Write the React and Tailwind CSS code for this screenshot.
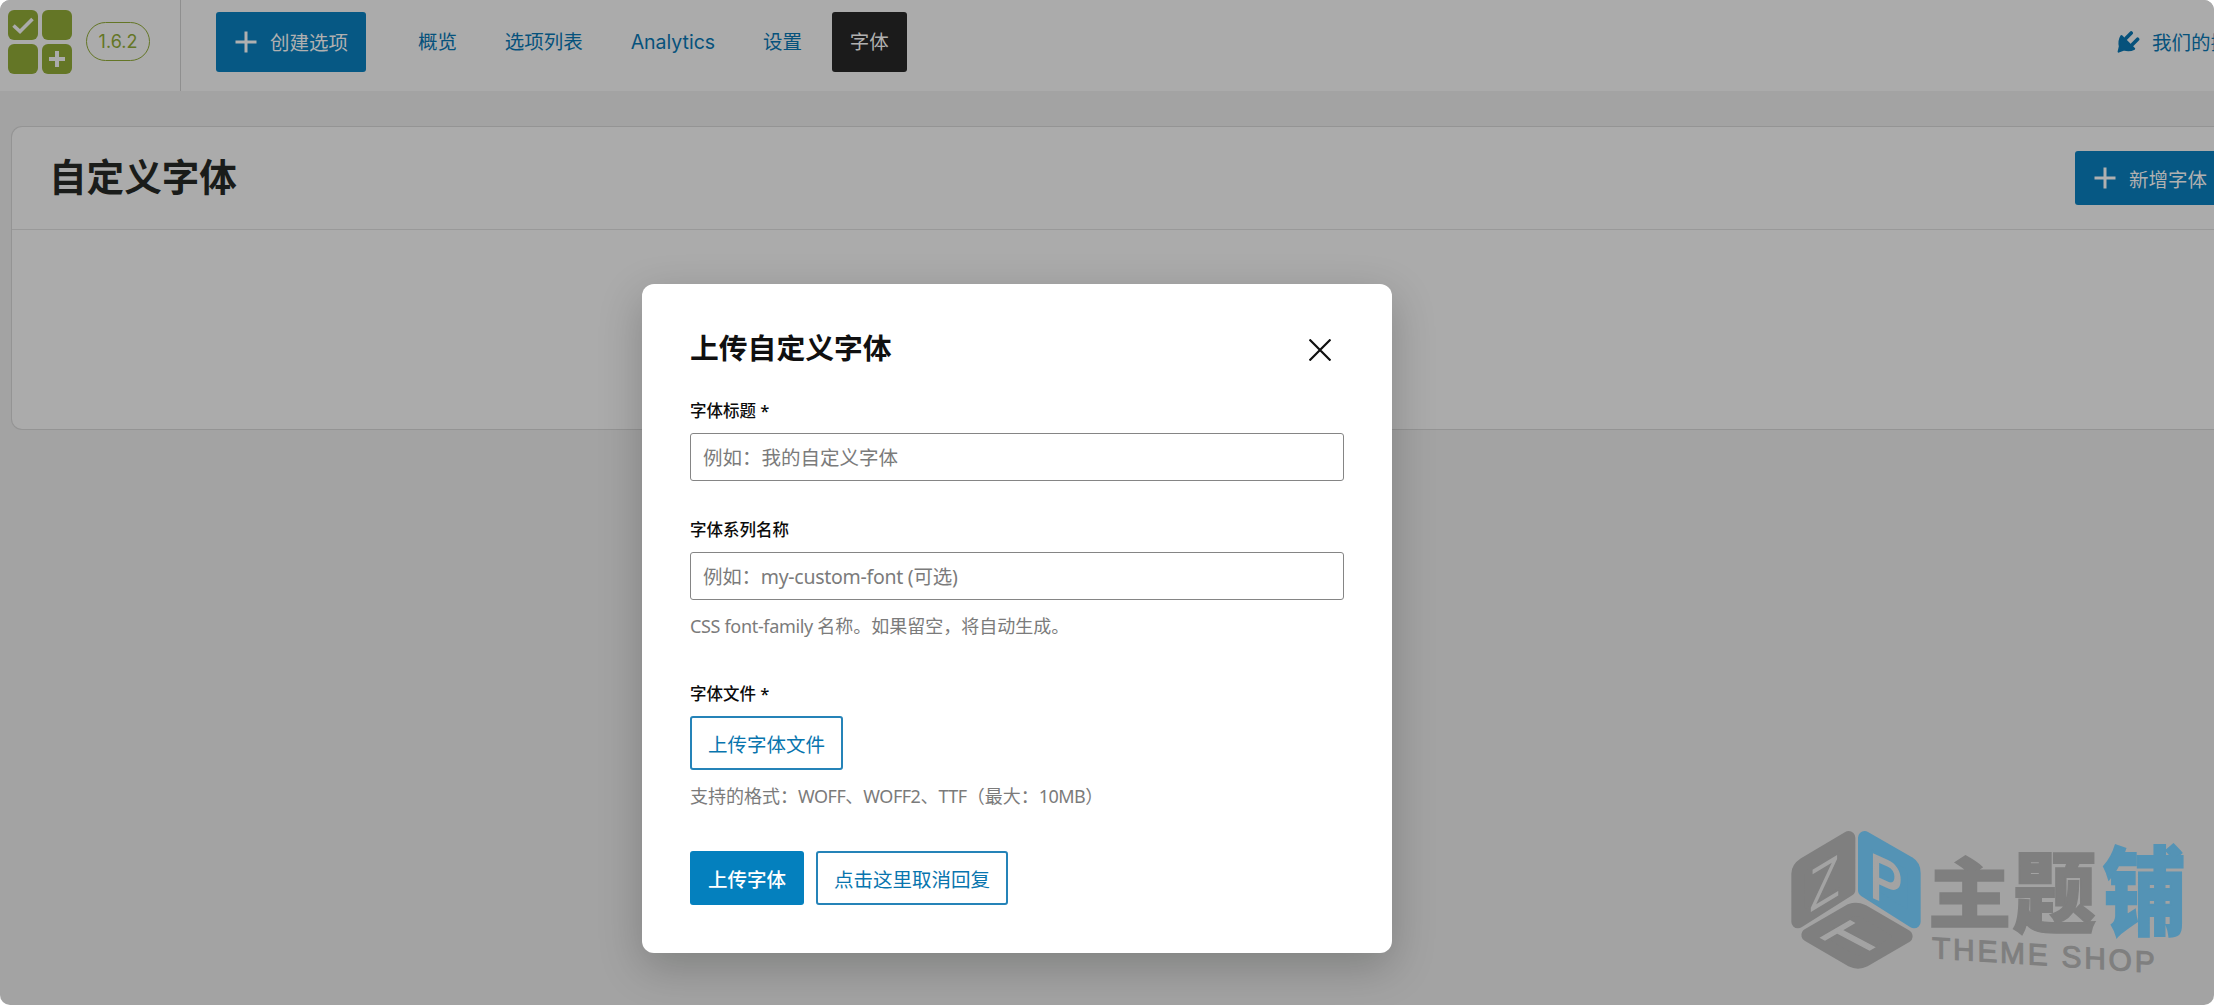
import React, { useState } from 'react';

const NAV_ITEMS = [
  { id: 'overview', label: '概览' },
  { id: 'list', label: '选项列表' },
  { id: 'analytics', label: 'Analytics' },
  { id: 'settings', label: '设置' },
  { id: 'fonts', label: '字体' }
];

const PlusIcon = () => (
  <svg width="22" height="22" viewBox="0 0 22 22" className="shrink-0">
    <path d="M11 0.5v21M0.5 11h21" stroke="currentColor" strokeWidth="3" />
  </svg>
);

const PlugIcon = () => (
  <svg width="24" height="24" viewBox="0 0 24 24" fill="currentColor" className="shrink-0">
    <path
      d="M5.4 6 18.2 18.8Q13.5 21.2 8 19.6L2.6 21.6 3.8 16.4Q2.6 10.6 5.4 6Z"
      stroke="currentColor"
      strokeWidth="2"
      strokeLinejoin="round"
    />
    <path d="M10 8.2 15.2 3M16.4 14.4 21.6 9.2" stroke="currentColor" strokeWidth="3.6" strokeLinecap="round" />
  </svg>
);

const Logo = () => (
  <svg width="64" height="64" viewBox="0 0 64 64" className="shrink-0">
    <g fill="#647626">
      <rect width="30" height="30" rx="6" />
      <rect x="34" width="30" height="30" rx="6" />
      <rect y="34" width="30" height="30" rx="6" />
      <rect x="34" y="34" width="30" height="30" rx="6" />
    </g>
    <path d="M5.5 15.5 12 21.5 24.5 9" fill="none" stroke="#ababab" strokeWidth="3.6" />
    <path d="M49 41v16M41 49h16" stroke="#ababab" strokeWidth="4" />
  </svg>
);

const Watermark = () => (
  <svg
    viewBox="0 0 1332 600"
    className="pointer-events-none absolute bottom-0 right-0 h-[200px] w-[444px] font-['Noto_Sans_CJK_SC',sans-serif]"
  >
    <g strokeLinejoin="round" strokeWidth="40">
      <path d="M236 98 102 178Q84 190 84 206V350L236 254Z" fill="#7f7f7f" stroke="#7f7f7f" />
      <path d="M284 98 416 174Q432 184 432 204V350L284 256Z" fill="#5493b5" stroke="#5493b5" />
      <path d="M242 316Q260 310 278 318L408 394 284 466Q264 476 244 466L114 390Z" fill="#7f7f7f" stroke="#7f7f7f" />
    </g>
    <g fill="#a3a3a3" className="font-['Liberation_Sans',sans-serif]" fontSize="150">
      <text transform="matrix(1 -.6 0 1.2 118 324)">Z</text>
      <text transform="matrix(.98 .45 0 1.25 299 272)" stroke="#a3a3a3" strokeWidth="5">P</text>
      <text transform="matrix(1.03 -.6 1.06 .56 259 458)" stroke="#a3a3a3" strokeWidth="4">T</text>
    </g>
    <g fontSize="250" fontWeight="900" strokeWidth="5">
      <text transform="translate(474 350) scale(1 .91)" fill="#7f7f7f" stroke="#7f7f7f">主</text>
      <text transform="translate(728 359) scale(1 1.05)" fill="#7f7f7f" stroke="#7f7f7f">题</text>
      <text transform="translate(998 366) scale(1 1.15)" fill="#5493b5" stroke="#5493b5">铺</text>
    </g>
    <text
      transform="translate(486 459) skewY(3.8)"
      className="font-['Liberation_Sans',sans-serif]"
      fontSize="90"
      textLength="668"
      fill="#7f7f7f"
      stroke="#7f7f7f"
      strokeWidth="3"
    >
      THEME SHOP
    </text>
  </svg>
);

const Header = ({ active, onSelect }) => (
  <header className="flex h-[91px] bg-[#ababab] text-[19.5px] text-[#06527c]">
    <div className="flex w-[181px] shrink-0 items-start border-r border-[#8f8f8f] pl-2 pt-2.5">
      <Logo />
      <span className="ml-[14px] mt-3 flex h-[39px] w-16 items-center justify-center rounded-full border border-[#647626] font-['Inter',sans-serif] text-[18px] text-[#647626]">
        1.6.2
      </span>
    </div>
    <button className="ml-[35px] mt-3 flex h-[60px] w-[150px] shrink-0 items-center gap-[13px] rounded-[3px] bg-[#065884] pl-[19px] text-[#b0b0b0]">
      <PlusIcon />
      <span className="pt-0.5">创建选项</span>
    </button>
    <nav className="ml-[34px] mt-3 flex h-[60px] shrink-0 gap-[11.8px] font-['Inter','Noto_Sans_CJK_SC',sans-serif]">
      {NAV_ITEMS.map((item) => (
        <button
          key={item.id}
          onClick={() => onSelect(item.id)}
          className={`h-[60px] rounded-[3px] px-[18px] pt-0.5 ${
            active === item.id ? 'bg-[#1b1b1b] text-[#b0b0b0]' : ''
          }`}
        >
          {item.label}
        </button>
      ))}
    </nav>
    <a className="ml-auto mt-3 flex h-[60px] w-[98px] shrink-0 items-center gap-3 overflow-hidden whitespace-nowrap">
      <PlugIcon />
      <span className="pt-0.5">我们的插</span>
    </a>
  </header>
);

const Field = ({ label, placeholder, inputClass = '' }) => (
  <label className="block">
    <span className="block h-[35px] text-[16.5px] leading-[25px] font-medium text-[#0b0b0b]">{label}</span>
    <input
      type="text"
      placeholder={placeholder}
      className={`block h-12 w-full rounded-[3px] border border-[#858585] bg-white px-3 pt-px text-[19.5px] placeholder:text-[#7b7b7b] ${inputClass}`}
    />
  </label>
);

const UploadDialog = ({ onClose }) => (
  <div className="absolute inset-0 flex justify-center pr-[180px] pt-[284px]">
    <div className="flex h-[669px] w-[750px] flex-col rounded-xl bg-white px-12 shadow-[0_14px_44px_rgba(0,10,5,0.22)]">
      <div className="flex h-[114px] shrink-0 items-start justify-between pt-11">
        <h2 className="text-[28.8px] leading-10 font-bold text-[#101010]">上传自定义字体</h2>
        <button onClick={onClose} aria-label="Close" className="mr-[13px] mt-[11px]">
          <svg width="22" height="22" viewBox="0 0 22 22">
            <path d="M0.5 0.5 21.5 21.5M21.5 0.5 0.5 21.5" stroke="#101010" strokeWidth="2.2" />
          </svg>
        </button>
      </div>

      <Field label="字体标题 *" placeholder="例如：我的自定义字体" />
      <div className="mt-9">
        <Field
          label="字体系列名称"
          placeholder="例如：my-custom-font (可选)"
          inputClass="tracking-[-0.27px]"
        />
        <p className="mt-3 text-[18px] leading-7 text-[#7b7b7b]">
          <span className="tracking-[-0.33px]">CSS font-family </span>名称。如果留空，将自动生成。
        </p>
      </div>

      <div className="mt-[41px]">
        <span className="block h-[35px] text-[16.5px] leading-[25px] font-medium text-[#0b0b0b]">字体文件 *</span>
        <button className="block h-[54px] w-[153px] rounded-[3px] border-2 border-[#2583b8] pt-[3px] text-[19.5px] text-[#0875ae]">
          上传字体文件
        </button>
        <p className="mt-3 text-[18px] leading-7 text-[#7b7b7b]">
          支持的格式：<span className="tracking-[-0.5px]">WOFF</span>、<span className="tracking-[-0.5px]">WOFF2</span>、
          <span className="tracking-[-0.5px]">TTF</span>（最大：<span className="tracking-[-0.5px]">10MB</span>）
        </p>
      </div>

      <div className="mt-[41px] flex gap-3 text-[19.5px]">
        <button className="h-[54px] w-[114px] rounded-[3px] bg-[#0480be] pt-[3px] font-medium text-white">上传字体</button>
        <button className="h-[54px] w-[192px] rounded-[3px] border-2 border-[#2583b8] pt-[3px] text-[#0875ae]">
          点击这里取消回复
        </button>
      </div>
    </div>
  </div>
);

const App = () => {
  const [active, setActive] = useState('fonts');
  const [open, setOpen] = useState(true);

  return (
    <div className="bg-white">
      <div className="relative h-[1005px] w-[2214px] overflow-hidden rounded-[10px] bg-[#a3a3a3] font-['Noto_Sans','Noto_Sans_CJK_SC',sans-serif]">
        <Header active={active} onSelect={setActive} />

        <main className="pl-[11px] pt-[35px]">
          <section className="h-[304px] rounded-l-[11px] border border-r-0 border-[#949494] bg-[#ababab]">
            <div className="flex h-[103px] items-start justify-between border-b border-[#999999] pl-[37px] pt-6">
              <h1 className="-mt-px text-[37.6px] leading-[54px] font-bold text-[#1a1c1a]">自定义字体</h1>
              <button
                onClick={() => setOpen(true)}
                className="flex h-[54px] w-[139px] items-center gap-[13px] whitespace-nowrap rounded-l-[3px] bg-[#065884] pl-[19px] text-[19.5px] text-[#b0b0b0]"
              >
                <PlusIcon />
                <span className="pt-[3px]">新增字体</span>
              </button>
            </div>
          </section>
        </main>

        {open && <UploadDialog onClose={() => setOpen(false)} />}
        <Watermark />
      </div>
    </div>
  );
};

export default App;
